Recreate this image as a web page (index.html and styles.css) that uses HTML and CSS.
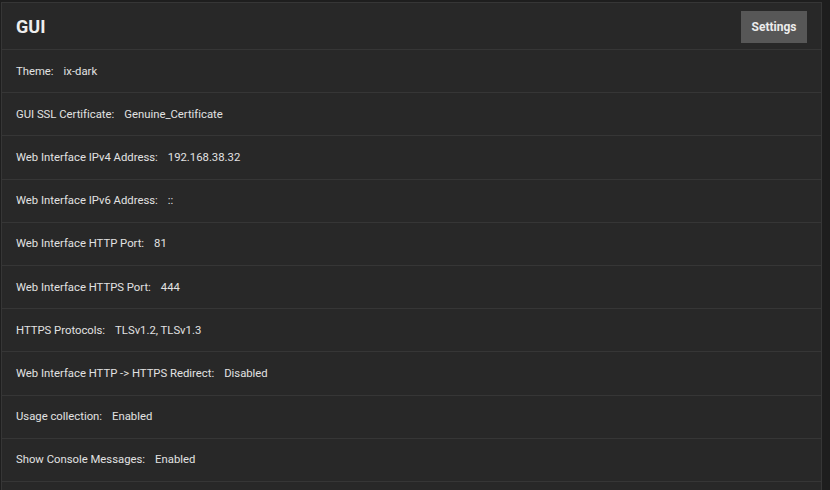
FILE: index.html
```html
<!DOCTYPE html>
<html lang="en">
<head>
<meta charset="UTF-8">
<title>GUI</title>
<link rel="stylesheet" href="styles.css">
</head>
<body>
    <div class="card">
        <div class="card-header">
            <h3 class="card-title">GUI</h3>
            <button class="btn">Settings</button>
        </div>
        <div class="row"><span class="label">Theme:</span><span class="value">ix-dark</span></div>
        <div class="row"><span class="label">GUI SSL Certificate:</span><span class="value">Genuine_Certificate</span></div>
        <div class="row"><span class="label">Web Interface IPv4 Address:</span><span class="value">192.168.38.32</span></div>
        <div class="row"><span class="label">Web Interface IPv6 Address:</span><span class="value">::</span></div>
        <div class="row"><span class="label">Web Interface HTTP Port:</span><span class="value">81</span></div>
        <div class="row"><span class="label">Web Interface HTTPS Port:</span><span class="value">444</span></div>
        <div class="row"><span class="label">HTTPS Protocols:</span><span class="value">TLSv1.2, TLSv1.3</span></div>
        <div class="row"><span class="label">Web Interface HTTP -&gt; HTTPS Redirect:</span><span class="value">Disabled</span></div>
        <div class="row"><span class="label">Usage collection:</span><span class="value">Enabled</span></div>
        <div class="row"><span class="label">Show Console Messages:</span><span class="value">Enabled</span></div>
        <div class="row row-last"></div>
    </div>
</body>
</html>
```

FILE: styles.css
```css
/* page background */
html {
    height: 490px;
    overflow: hidden;
}
body {
    margin: 0;
    padding: 2px 8px 0 1px;
    background: #1e1e1e;
    font-family: Roboto, "Noto Sans", sans-serif;
    color: #e2e2e2;
    height: 490px;
    overflow: hidden;
    box-sizing: border-box;
}
/* card */
.card {
    background: #282828;
    border: 1px solid #363636;
    border-bottom: none;
}
.card-header {
    display: flex;
    align-items: center;
    justify-content: space-between;
    height: 46px;
    padding: 0 14px 0 14px;
}
.card-title {
    margin: 0;
    font-size: 18px;
    font-weight: 700;
    color: #eeeeee;
}
.btn {
    width: 66px;
    height: 32px;
    border: none;
    background: #575757;
    color: #ececec;
    font-family: Roboto, sans-serif;
    font-size: 12px;
    font-weight: 700;
    padding: 0;
    margin-top: 1px;
}
/* rows */
.row {
    display: flex;
    align-items: center;
    gap: 10px;
    height: 42.2px;
    padding: 0 14px;
    border-top: 1px solid #363636;
    font-size: 11.3px;
    font-variant-ligatures: none;
}
.row-last {
    height: 10px;
}
```
